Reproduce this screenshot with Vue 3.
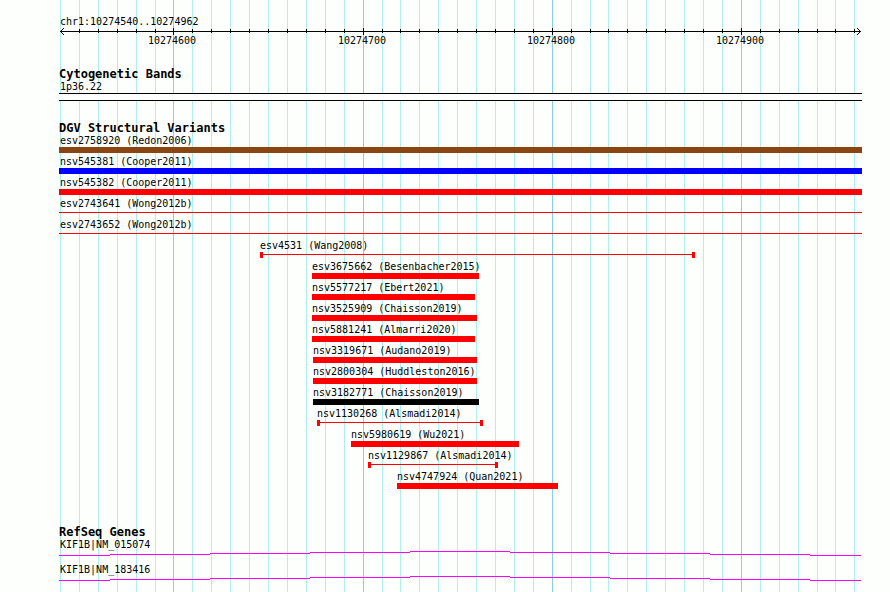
<script setup>
// Track coordinates run from 0 to SPAN across the panel.
const SPAN = 803
const pct = (v) => `${(v / SPAN) * 100}%`

const PER_TEN = 8000 / 423
const grid = Array.from({ length: 43 }, (_, i) => ({
  at: Math.floor(1.51 + i * PER_TEN),
  major: i % 10 === 6,
  label: 10274540 + i * 10,
}))
const majors = grid.filter((g) => g.major)

const variants = [
  { name: 'esv2758920 (Redon2006)', from: 0, to: 803, kind: 'brown' },
  { name: 'nsv545381 (Cooper2011)', from: 0, to: 803, kind: 'blue' },
  { name: 'nsv545382 (Cooper2011)', from: 0, to: 803, kind: 'red' },
  { name: 'esv2743641 (Wong2012b)', from: 0, to: 803, kind: 'line' },
  { name: 'esv2743652 (Wong2012b)', from: 0, to: 803, kind: 'line' },
  { name: 'esv4531 (Wang2008)', from: 201, to: 636, kind: 'line capped' },
  { name: 'esv3675662 (Besenbacher2015)', from: 253, to: 420, kind: 'red' },
  { name: 'nsv5577217 (Ebert2021)', from: 253, to: 416, kind: 'red' },
  { name: 'nsv3525909 (Chaisson2019)', from: 253, to: 418, kind: 'red' },
  { name: 'nsv5881241 (Almarri2020)', from: 253, to: 416, kind: 'red' },
  { name: 'nsv3319671 (Audano2019)', from: 254, to: 418, kind: 'red' },
  { name: 'nsv2800304 (Huddleston2016)', from: 254, to: 418, kind: 'red' },
  { name: 'nsv3182771 (Chaisson2019)', from: 254, to: 420, kind: 'black' },
  { name: 'nsv1130268 (Alsmadi2014)', from: 258, to: 424, kind: 'line capped' },
  { name: 'nsv5980619 (Wu2021)', from: 292, to: 460, kind: 'red' },
  { name: 'nsv1129867 (Alsmadi2014)', from: 309, to: 439, kind: 'line capped' },
  { name: 'nsv4747924 (Quan2021)', from: 338, to: 499, kind: 'red' },
]
const labelAt = (v) => pct(Math.max(v.from, 1))

const genes = ['KIF1B|NM_015074', 'KIF1B|NM_183416']
// Intron line rises one step per block up to the middle, then falls.
const steps = [
  [0, 51, 4], [51, 100, 3], [151, 100, 2], [251, 100, 1], [351, 100, 0],
  [451, 100, 1], [551, 100, 2], [651, 100, 3], [751, 51, 4],
]
</script>

<template>
  <main class="browser">
    <div class="panel">
      <div class="grid" aria-hidden="true">
        <i v-for="g in grid" :key="g.label" :class="{ major: g.major }" :style="{ left: pct(g.at) }"></i>
      </div>

      <header class="ruler">
        <p class="label region">chr1:10274540..10274962</p>
        <div class="axis">
          <svg class="arrow" width="4" height="7" viewBox="0 0 4 7" aria-hidden="true">
            <path d="M3 0h1v1h-1zM2 1h1v1h-1zM1 2h1v1h-1zM0 3h1v1h-1zM1 4h1v1h-1zM2 5h1v1h-1zM3 6h1v1h-1z" />
          </svg>
          <div class="rule"></div>
          <svg class="arrow" width="4" height="7" viewBox="0 0 4 7" aria-hidden="true">
            <path d="M0 0h1v1h-1zM1 1h1v1h-1zM2 2h1v1h-1zM3 3h1v1h-1zM2 4h1v1h-1zM1 5h1v1h-1zM0 6h1v1h-1z" />
          </svg>
          <i v-for="g in grid.slice(1)" :key="g.label" class="tick" :class="{ major: g.major }" :style="{ left: pct(g.at) }"></i>
        </div>
        <div class="numbers">
          <span v-for="g in majors" :key="g.label" class="label number" :style="{ left: pct(g.at - 1) }">{{ g.label }}</span>
        </div>
      </header>

      <section class="track bands">
        <h2>Cytogenetic Bands</h2>
        <p class="label">1p36.22</p>
        <div class="band"></div>
      </section>

      <section class="track variants">
        <h2>DGV Structural Variants</h2>
        <div v-for="v in variants" :key="v.name" class="variant">
          <p class="label" :style="{ marginLeft: labelAt(v) }">{{ v.name }}</p>
          <div class="bar" :class="v.kind" :style="{ marginLeft: pct(v.from), width: pct(v.to - v.from) }"></div>
        </div>
      </section>

      <section class="track genes">
        <h2>RefSeq Genes</h2>
        <div v-for="name in genes" :key="name" class="gene">
          <p class="label">{{ name }}</p>
          <svg class="intron" viewBox="0 0 803 5" preserveAspectRatio="none" aria-hidden="true">
            <rect v-for="s in steps" :key="s[0]" :x="s[0]" :y="s[2]" :width="s[1]" height="1" />
          </svg>
        </div>
      </section>
    </div>
  </main>
</template>

<style>
body {
  background: #fcfffc;
}
</style>

<style scoped>
.browser {
  padding: 0 28px 0 59px;
  color: #000;
  font-family: "DejaVu Sans Mono", "Liberation Mono", monospace;
}
.panel {
  position: relative;
  padding: 15px 0 10px;
}
.grid {
  position: absolute;
  inset: 0;
}
.grid i {
  position: absolute;
  top: 0;
  bottom: 0;
  width: 1px;
  background: #afeeee;
}
.grid i.major {
  background: #87ceeb;
}
.ruler,
.track {
  position: relative;
}
h2,
p {
  margin: 0;
  white-space: nowrap;
}
h2 {
  font-size: 12px;
  font-weight: bold;
  line-height: 14px;
}
.label {
  margin-left: 1px;
  font-size: 10px;
  line-height: 13px;
}
.axis {
  position: relative;
  display: flex;
  align-items: center;
  height: 7px;
  padding: 0 1px;
}
.rule {
  flex: 1;
  height: 1px;
  margin: 0 -3px;
  background: #000;
}
.arrow {
  flex: none;
  fill: #000;
  shape-rendering: crispEdges;
}
.axis .tick {
  position: absolute;
  top: 1px;
  width: 1px;
  height: 4px;
  background: #000;
}
.axis .tick.major {
  top: 0;
  height: 7px;
}
.numbers {
  position: relative;
  height: 13px;
  margin-top: -1px;
}
.number {
  position: absolute;
  top: 0;
  margin-left: 0;
  transform: translateX(-50%);
}
.bands {
  margin-top: 20px;
}
.bands h2,
.variants h2,
.genes h2 {
  margin-bottom: -1px;
}
.band {
  height: 6px;
  border: solid #000;
  border-width: 1px 0;
  background: #fff;
}
.variants {
  margin-top: 20px;
}
.variant {
  height: 21px;
}
.bar {
  box-sizing: border-box;
  height: 6px;
}
.brown {
  background: #8b4513;
}
.blue {
  background: #00f;
}
.red {
  background: #f00;
}
.black {
  background: #000;
}
.line {
  background: linear-gradient(#f00, #f00) 0 2px / 100% 1px no-repeat;
}
.capped {
  border: solid #f00;
  border-width: 0 3px;
}
.genes {
  margin-top: 34px;
}
.gene {
  height: 25px;
}
.intron {
  display: block;
  width: 100%;
  height: 5px;
  fill: #f0f;
  shape-rendering: crispEdges;
}
</style>
